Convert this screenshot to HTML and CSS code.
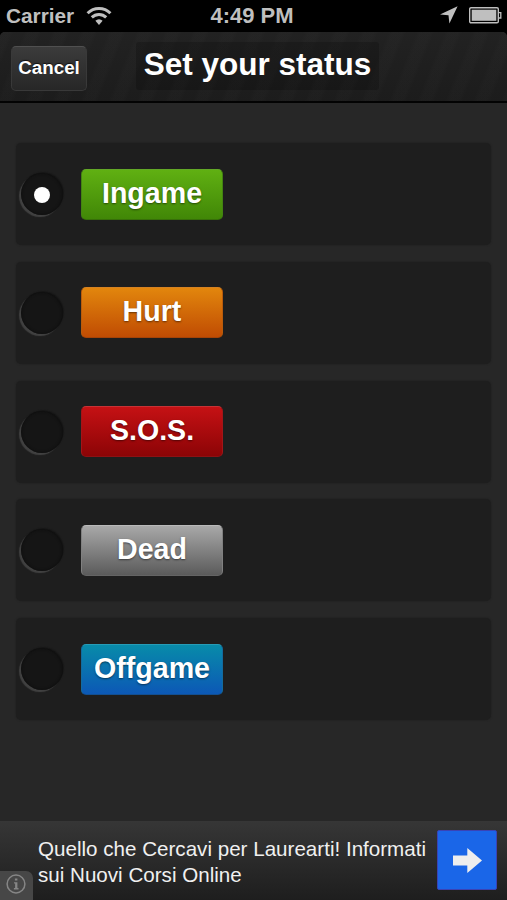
FILE: index.html
```html
<!DOCTYPE html>
<html lang="en">
<head>
    <meta charset="UTF-8">
    <meta name="viewport" content="width=device-width, initial-scale=1.0">
    <title>Set your status</title>
    <link rel="stylesheet" href="styles.css">
</head>
<body>
    <div class="app">
        <div class="statusbar">
            <div class="carrier">
                <span>Carrier</span>
                <svg class="wifi" width="26" height="20" viewBox="0 0 26 20">
                    <path d="M1.6 7.2a16 16 0 0 1 22.8 0M5.8 11.4a10.2 10.2 0 0 1 14.4 0" fill="none" stroke="#bfbfbf" stroke-width="3"/>
                    <path d="M13 19l-3.6-4.2a5 5 0 0 1 7.2 0z" fill="#bfbfbf"/>
                </svg>
            </div>
            <div class="time">4:49 PM</div>
            <div class="indicators">
                <svg width="18" height="18" viewBox="0 0 18 18">
                    <path d="M17.6.2L9.4 17.6 8.5 9.3 0 8.6z" fill="#bfbfbf"/>
                </svg>
                <svg width="33" height="17" viewBox="0 0 33 17">
                    <rect x=".7" y=".7" width="28.6" height="15.1" rx="1.3" fill="none" stroke="#bfbfbf" stroke-width="1.4"/>
                    <rect x="2.7" y="2.7" width="24.6" height="11.1" fill="#bfbfbf"/>
                    <path d="M29.5 5.7h2.3v5.3h-2.3" fill="none" stroke="#bfbfbf" stroke-width="1.3"/>
                </svg>
            </div>
        </div>

        <div class="navbar">
            <button class="cancel">Cancel</button>
            <div class="title">Set your status</div>
        </div>

        <div class="list">
            <div class="row">
                <div class="radio act"></div>
                <div class="btn green">Ingame</div>
            </div>
            <div class="row">
                <div class="radio"></div>
                <div class="btn orange">Hurt</div>
            </div>
            <div class="row">
                <div class="radio"></div>
                <div class="btn red">S.O.S.</div>
            </div>
            <div class="row">
                <div class="radio"></div>
                <div class="btn gray">Dead</div>
            </div>
            <div class="row">
                <div class="radio"></div>
                <div class="btn blue">Offgame</div>
            </div>
        </div>

        <div class="ad">
            <div class="adtext">Quello che Cercavi per Laurearti! Informati<br>sui Nuovi Corsi Online</div>
            <div class="go">
                <svg width="29" height="25" viewBox="0 0 29 25">
                    <path d="M0 7.5h14.3V0L29 12.4 14.3 25v-7.5H0z" fill="#eee"/>
                </svg>
            </div>
            <div class="info">
                <svg width="20" height="20" viewBox="0 0 20 20">
                    <circle cx="10" cy="10" r="8.9" fill="none" stroke="#868686" stroke-width="1.5"/>
                    <path d="M8.9 4.4h2.5v2.2H8.9zM8 8.2h3.4v5.8h1.1v1.4H7.9V14h1.2V9.6H8z" fill="#868686"/>
                </svg>
            </div>
        </div>
    </div>
</body>
</html>
```
FILE: styles.css
```css
body{
    margin: 0;
    background-color: #000;
    font-family: "Liberation Sans", Arial, sans-serif;
}
.app{
    width: 507px;
    height: 900px;
    display: flex;
    flex-direction: column;
    overflow: hidden;
    background-color: #272727;
}
.statusbar{
    height: 32px;
    flex-shrink: 0;
    display: grid;
    grid-template-columns: 1fr auto 1fr;
    align-items: center;
    padding: 0 5px 0 6px;
    background-color: #000;
    color: #bfbfbf;
    font-size: 20.8px;
    font-weight: bold;
}
.carrier{
    display: flex;
    align-items: center;
    gap: 12px;
}
.time{
    padding-right: 4px;
    font-size: 22px;
}
.indicators{
    display: flex;
    justify-content: flex-end;
    align-items: center;
    gap: 11px;
    padding-bottom: 2px;
}
.navbar{
    position: relative;
    height: 71px;
    flex-shrink: 0;
    box-sizing: border-box;
    display: flex;
    align-items: flex-start;
    padding: 10px 11px;
    border-bottom: 2px solid #030303;
    border-radius: 5px 5px 0 0;
    background: repeating-linear-gradient(112deg, rgba(255,255,255,.012) 0 9px, transparent 13px 22px, rgba(255,255,255,.012) 26px), linear-gradient(#222, #1c1c1c);
    box-shadow: 0 -6px 0 #000;
    color: #fff;
}
.cancel{
    width: 76px;
    height: 45px;
    margin-top: 4px;
    padding: 0 0 1px;
    border: 1px solid #393939;
    border-top-color: #505050;
    border-radius: 5px;
    background: linear-gradient(#3b3b3b, #272727);
    color: #fff;
    font-family: inherit;
    font-size: 18.8px;
    font-weight: bold;
    text-shadow: 0 -1px 1px #111;
}
.title{
    width: 243px;
    height: 48px;
    margin-left: 49px;
    border-radius: 3px;
    background-color: rgba(0,0,0,.18);
    line-height: 44px;
    font-size: 31.5px;
    font-weight: bold;
    text-align: center;
    white-space: nowrap;
}
.list{
    flex: 1;
    display: flex;
    flex-direction: column;
    gap: 16.8px;
    padding: 40px 16px 0;
}
.row{
    height: 102px;
    box-sizing: border-box;
    display: flex;
    align-items: center;
    gap: 18px;
    padding-left: 5px;
    border-radius: 5px;
    background-color: #1e1e1e;
    box-shadow: 0 0 2px #1e1e1e;
}
.radio{
    width: 42px;
    height: 42px;
    display: flex;
    align-items: center;
    justify-content: center;
    border-radius: 50%;
    background-color: #151515;
    box-shadow: -2px 2px 1px 0 #414141, 1px -1px 1px #161616, inset 0 0 3px #0b0b0b;
}
.radio.act::after{
    content: "";
    width: 16px;
    height: 16px;
    margin-top: 2px;
    border-radius: 50%;
    background-color: #fff;
}
.btn{
    width: 142px;
    height: 51px;
    box-sizing: border-box;
    border: 1px solid;
    border-radius: 5px;
    color: #fff;
    line-height: 46px;
    font-size: 28.6px;
    font-weight: bold;
    text-align: center;
    text-shadow: 0 1px 2px rgba(0,0,0,.5);
}
.green{
    background: linear-gradient(#60b012, #418707);
    border-color: #63a827 #438411 #376f09;
}
.orange{
    background: linear-gradient(#e2860d, #c04c03);
    border-color: #d68221 #b95b0b #a54307;
}
.red{
    background: linear-gradient(#c51114, #8c0406);
    border-color: #c73236 #a31518 #8e1114;
}
.gray{
    background: linear-gradient(#a8a8a8, #5b5b5b);
    border-color: #bababa #808080 #646464;
}
.blue{
    background: linear-gradient(#088ba9, #0c58b6);
    border-color: #279bb6 #136b9e #124f91;
}
.ad{
    position: relative;
    height: 79px;
    flex-shrink: 0;
    box-sizing: border-box;
    display: flex;
    align-items: center;
    justify-content: space-between;
    padding: 0 10px 1px 38px;
    background: linear-gradient(#363636, #1e1e1e);
}
.adtext{
    padding-top: 3px;
    color: #f0f0f0;
    font-size: 20.6px;
    line-height: 25.5px;
    white-space: nowrap;
}
.go{
    width: 60px;
    height: 60px;
    box-sizing: border-box;
    display: flex;
    align-items: center;
    justify-content: center;
    border: 1px solid #3a42b5;
    border-radius: 2px;
    background-color: #1a66e8;
}
/* ad badge in the corner */
.info{
    position: absolute;
    left: 0;
    bottom: 0;
    width: 33px;
    height: 29px;
    box-sizing: border-box;
    padding: 3px 0 0 6px;
    border-radius: 0 7px 0 0;
    background-color: #474747;
}
```
